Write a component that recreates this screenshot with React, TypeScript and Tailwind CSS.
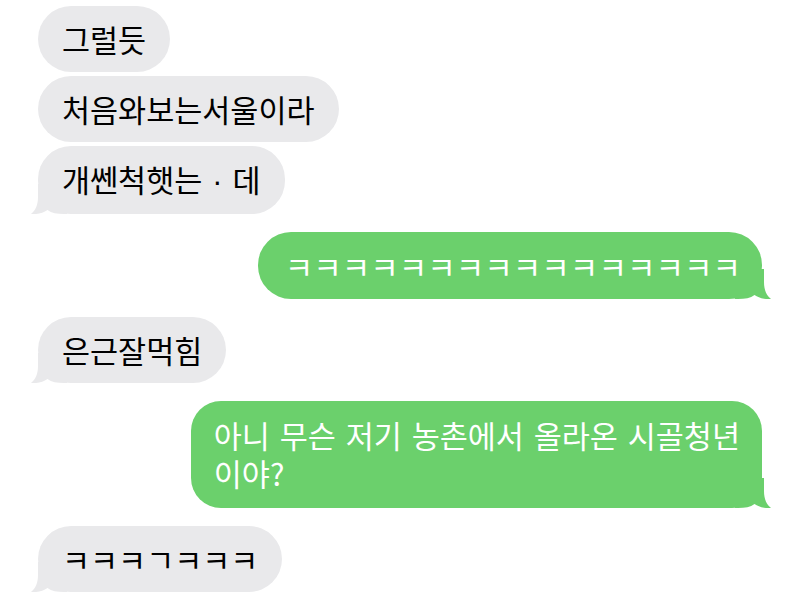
import type { ReactNode } from 'react'

type Side = 'in' | 'out'

interface Message {
  side: Side
  text: ReactNode
  tail?: boolean
  gapTop: string
  kind?: 'laugh' | 'long'
}

const FONT = '"Noto Sans CJK KR", "Noto Sans", sans-serif'

const messages: Message[] = [
  { side: 'in', text: '그럴듯', gapTop: 'mt-[6px]' },
  { side: 'in', text: '처음와보는서울이라', gapTop: 'mt-[4px]' },
  {
    side: 'in',
    text: (
      <>
        개쎈척햇는<span className="mx-[10px] font-['Liberation_Sans']">·</span>데
      </>
    ),
    gapTop: 'mt-[4px]',
    tail: true,
  },
  {
    side: 'out',
    text: 'ㅋㅋㅋㅋㅋㅋㅋㅋㅋㅋㅋㅋㅋㅋㅋㅋ',
    gapTop: 'mt-[18px]',
    tail: true,
    kind: 'laugh',
  },
  { side: 'in', text: '은근잘먹힘', gapTop: 'mt-[18px]', tail: true },
  {
    side: 'out',
    text: (
      <>
        아니 무슨 저기 농촌에서 올라온 시골청년
        <br />
        이야?
      </>
    ),
    gapTop: 'mt-[18px]',
    tail: true,
    kind: 'long',
  },
  { side: 'in', text: 'ㅋㅋㅋㄱㅋㅋㅋ', gapTop: 'mt-[18px]', tail: true },
]

// little hook at the bottom corner of the last bubble in a run
function Tail({ side }: { side: Side }) {
  const fill = side === 'in' ? '#e9e9eb' : '#6bd06c'
  return (
    <svg
      width="36"
      height="30"
      viewBox="0 0 36 30"
      className={
        side === 'in'
          ? 'absolute left-[-7px] bottom-0'
          : 'absolute right-[-9px] bottom-0 -scale-x-100'
      }
    >
      <path
        d="M7 0 L7 13 C7 21 4.5 26.5 0 30 C6 30.6 12 29 16.5 26 C20.5 29 26 30 33 30 L36 30 L36 0 Z"
        fill={fill}
      />
    </svg>
  )
}

function bubbleClass(msg: Message) {
  if (msg.side === 'in') {
    return 'relative rounded-[33px] bg-[#e9e9eb] px-[24px] py-[14px] text-[30.5px] leading-[38px] text-black'
  }
  if (msg.kind === 'long') {
    return 'relative rounded-[30px] bg-[#6bd06c] pl-[23px] pr-[22px] pt-[15px] pb-[16px] text-[30.5px] leading-[38px] [word-spacing:3px] text-white'
  }
  return 'relative rounded-[33px] bg-[#6bd06c] pl-[27px] pr-[21px] py-[14px] text-[31px] leading-[39px] text-white'
}

function Bubble({ msg }: { msg: Message }) {
  const incoming = msg.side === 'in'
  return (
    <div className={`flex ${incoming ? 'justify-start' : 'justify-end'} ${msg.gapTop}`}>
      <div className={bubbleClass(msg)} style={{ fontFamily: FONT }}>
        {msg.tail && <Tail side={msg.side} />}
        <span className="relative whitespace-nowrap">{msg.text}</span>
      </div>
    </div>
  )
}

export default function App() {
  return (
    <div className="h-[595px] w-[800px] overflow-hidden bg-white px-[38px]">
      {messages.map((m, i) => (
        <Bubble key={i} msg={m} />
      ))}
    </div>
  )
}
